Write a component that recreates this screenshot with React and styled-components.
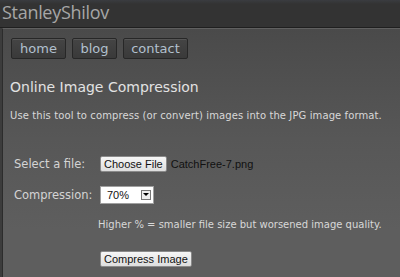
import React from "react";
import styled, { createGlobalStyle } from "styled-components";

const Global = createGlobalStyle`
  html, body { margin: 0; padding: 0; background: #5d5d5d; }
  body { width: 400px; height: 277px; overflow: hidden; }
`;

const Page = styled.div`
  width: 400px;
  height: 277px;
  display: flex;
  flex-direction: column;
  background: #3c3c3c;
`;

const Header = styled.header`
  height: 27px;
  flex: none;
  background: linear-gradient(#3a3c40, #333333 4px, #333333);
  border-bottom: 1px solid #1f1f1f;
  display: flex;
  align-items: center;
  padding-left: 2px;
`;

const Title = styled.div`
  font-family: "Open Sans", sans-serif;
  font-size: 18px;
  color: #a6a6a6;
  letter-spacing: -0.3px;
  line-height: 1;
  margin-top: -4px;
`;

const Panel = styled.main`
  flex: 1;
  margin-left: 2px;
  border-left: 1px solid #2c2c2c;
  border-top: 1px solid #606060;
  background: linear-gradient(#4a4a4a, #575757 110px, #5e5e5e 200px, #5e5e5e);
  padding: 9px 0 0 7px;
`;

const Nav = styled.nav`
  display: flex;
  gap: 6px;
  margin-left: 1px;
`;

const NavButton = styled.a`
  height: 21px;
  width: ${(p) => p.w}px;
  box-sizing: border-box;
  display: flex;
  align-items: center;
  justify-content: center;
  border: 1px solid #272727;
  border-radius: 2px;
  background: linear-gradient(#444, #3a3a3a);
  box-shadow: inset 0 1px 0 #555;
  font-family: "DejaVu Sans", sans-serif;
  font-size: 13px;
  color: #b2c0ce;
  text-decoration: none;
  padding-bottom: 1px;
`;

const Heading = styled.h1`
  margin: 20px 0 0 0;
  font-family: "DejaVu Sans", sans-serif;
  font-weight: normal;
  font-size: 14px;
  color: #e2e2e2;
`;

const Intro = styled.p`
  margin: 15px 0 0 0;
  font-family: "DejaVu Sans", sans-serif;
  font-size: 10px;
  letter-spacing: 0.1px;
  color: #d8d8d8;
`;

const Form = styled.div`
  margin: 35px 0 0 4px;
  display: grid;
  grid-template-columns: 86px auto;
  row-gap: 14px;
  align-items: center;
`;

const Label = styled.span`
  font-family: "DejaVu Sans", sans-serif;
  font-size: 11.5px;
  color: #d4d4d4;
`;

const FileRow = styled.div`
  display: flex;
  align-items: center;
  gap: 4px;
`;

const NativeButton = styled.button`
  font-family: "Liberation Sans", Arial, sans-serif;
  font-size: 11px;
  color: #111;
  height: 16px;
  padding: 0 3px;
  border: 1px solid #8a8a8a;
  border-radius: 2px;
  background: linear-gradient(#f6f6f6, #dedede);
  line-height: 14px;
`;

const FileName = styled.span`
  font-family: "Liberation Sans", Arial, sans-serif;
  font-size: 11px;
  color: #111;
`;

const Select = styled.div`
  width: 54px;
  height: 18px;
  box-sizing: border-box;
  background: #fff;
  border: 1px solid #a0a0a0;
  display: flex;
  align-items: center;
  justify-content: space-between;
  padding: 0 2px 0 6px;
  font-family: "Liberation Sans", Arial, sans-serif;
  font-size: 11px;
  color: #111;
`;

const Arrow = styled.span`
  width: 10px;
  height: 10px;
  box-sizing: border-box;
  border: 1px solid #777;
  background: #eee;
  display: flex;
  align-items: center;
  justify-content: center;
`;

const Hint = styled.p`
  grid-column: 2;
  margin: 1px 0 0 -2px;
  font-family: "DejaVu Sans", sans-serif;
  font-size: 10px;
  color: #d8d8d8;
`;

const Submit = styled(NativeButton)`
  margin: 21px 0 0 90px;
`;

export default function App() {
  return (
    <>
      <Global />
      <Page>
        <Header>
          <Title>StanleyShilov</Title>
        </Header>
        <Panel>
          <Nav>
            <NavButton w={55}>home</NavButton>
            <NavButton w={45}>blog</NavButton>
            <NavButton w={65}>contact</NavButton>
          </Nav>
          <Heading>Online Image Compression</Heading>
          <Intro>Use this tool to compress (or convert) images into the JPG image format.</Intro>
          <Form>
            <Label>Select a file:</Label>
            <FileRow>
              <NativeButton>Choose File</NativeButton>
              <FileName>CatchFree-7.png</FileName>
            </FileRow>
            <Label>Compression:</Label>
            <Select>
              70%
              <Arrow>
                <svg width="6" height="4" viewBox="0 0 6 4"><path d="M0 0h6L3 3z" fill="#000" /></svg>
              </Arrow>
            </Select>
            <Hint>Higher % = smaller file size but worsened image quality.</Hint>
          </Form>
          <Submit>Compress Image</Submit>
        </Panel>
      </Page>
    </>
  );
}
